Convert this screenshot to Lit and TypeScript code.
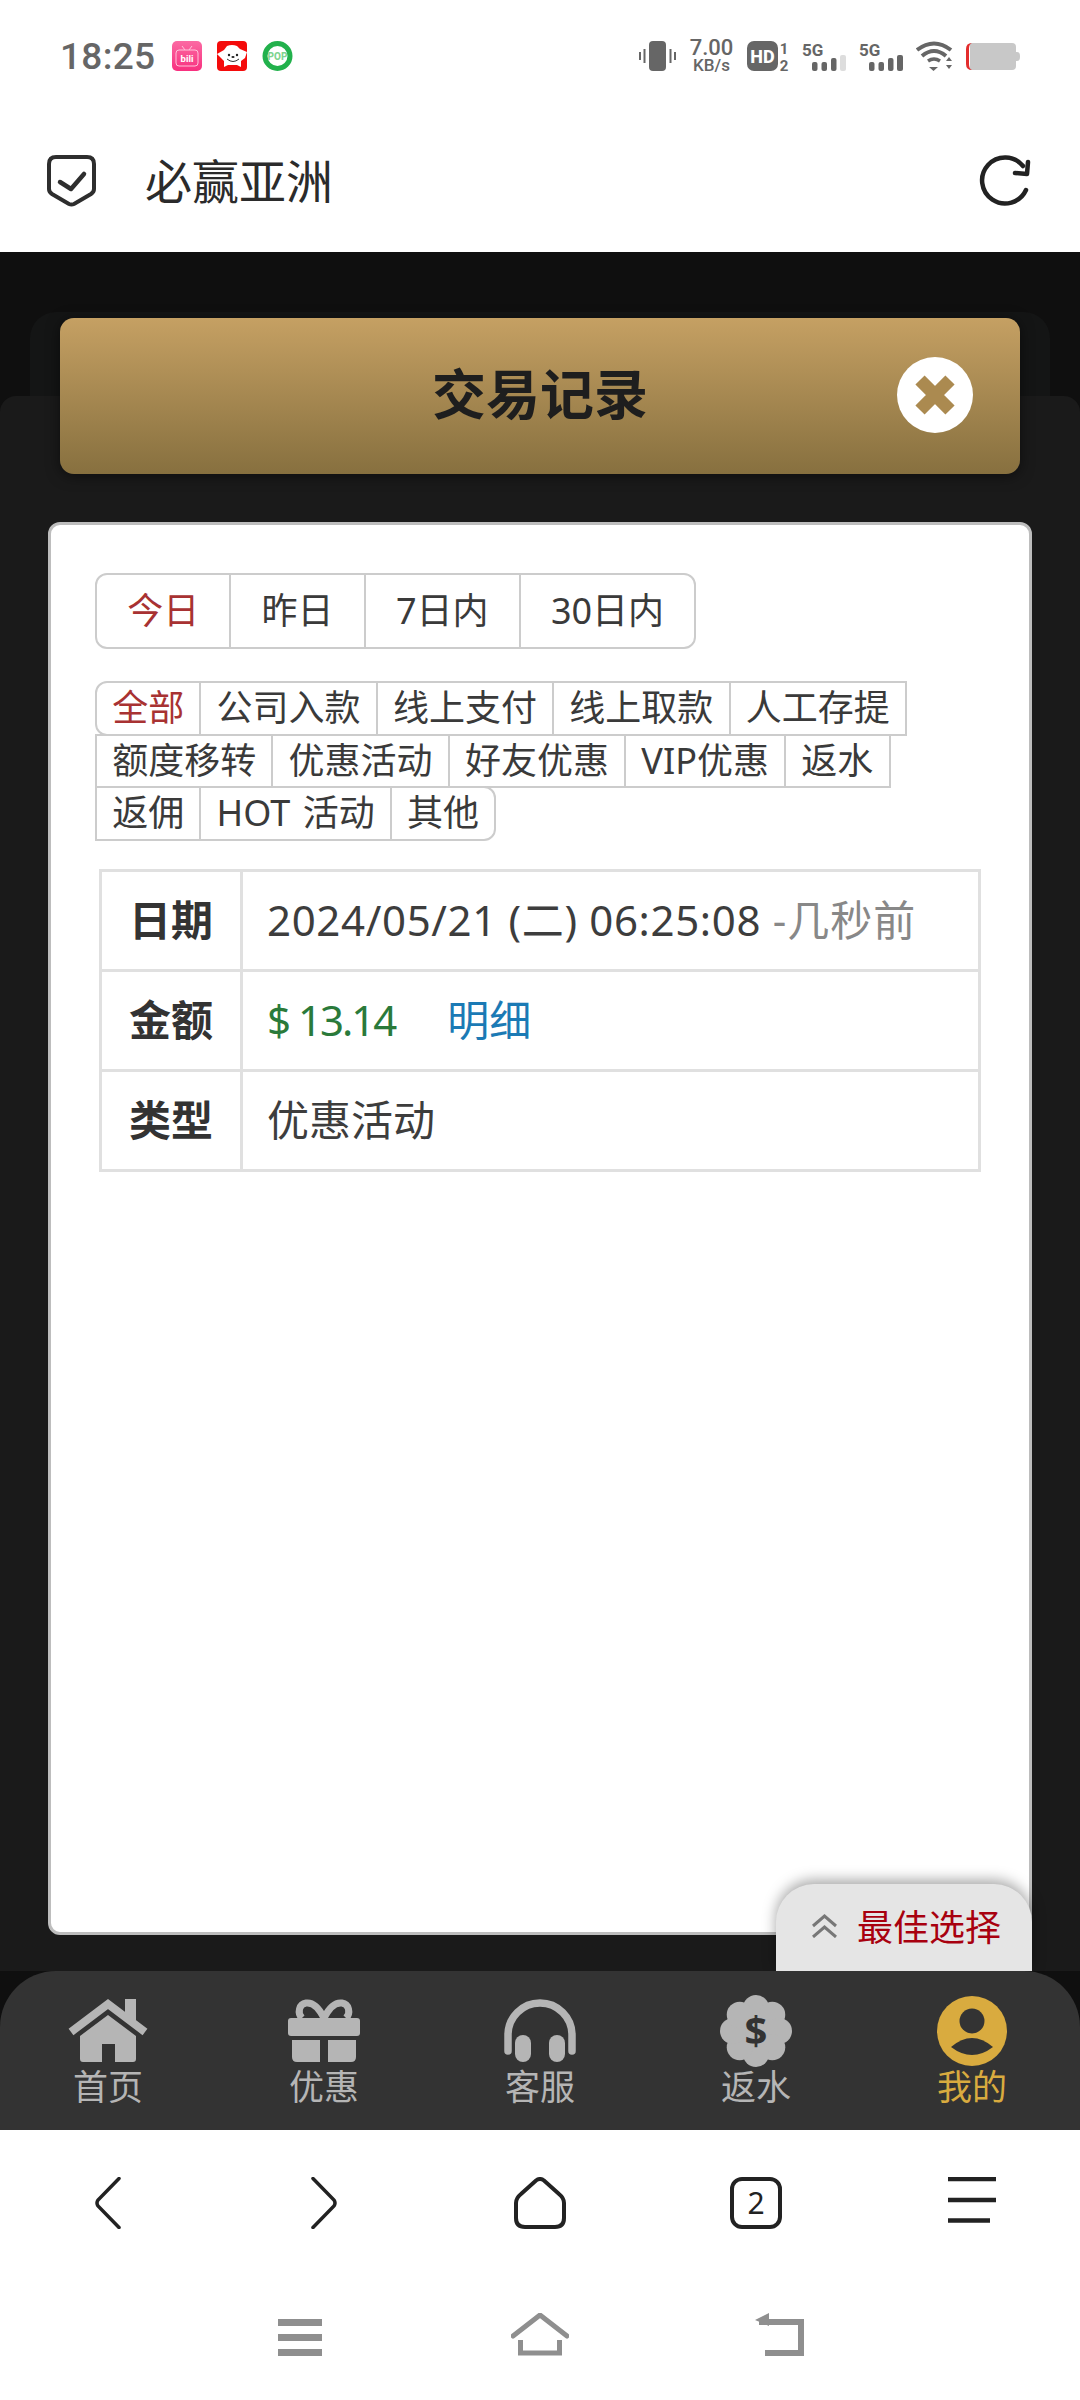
import {LitElement, html, css, svg} from 'lit';
import {customElement, state} from 'lit/decorators.js';

const RANGES = ['今日', '昨日', '7日内', '30日内'];
const TYPES = ['全部', '公司入款', '线上支付', '线上取款', '人工存提', '额度移转', '优惠活动', '好友优惠', 'VIP优惠', '返水', '返佣', 'HOT 活动', '其他'];

// signal strength with the 5G tag on top, last bar can be dimmed
const signal = (dimLast: boolean) => html`
  <svg class="sb-signal" width="44" height="30" viewBox="0 0 44 30">
    <text x="0" y="15" class="sb-tag">5G</text>
    <rect x="10" y="21" width="5.5" height="9" rx="2" fill="#666"/>
    <rect x="19.5" y="21" width="5.5" height="9" rx="2" fill="#666"/>
    <rect x="29" y="17" width="5.5" height="13" rx="2" fill="#666"/>
    <rect x="38" y="14" width="6" height="16" rx="2" fill=${dimLast ? '#ddd' : '#666'}/>
  </svg>`;

const flowerLobes = Array.from({length: 8}, (_, i) => {
  const a = (i * Math.PI) / 4 - Math.PI / 2;
  return svg`<circle cx=${36 + 23 * Math.cos(a)} cy=${36 + 23 * Math.sin(a)} r="13" fill="#b5b5b5"/>`;
});

const NAV = [
  {label: '首页', icon: html`<svg width="82" height="72" viewBox="0 -4 82 72">
      <rect x="58" y="0" width="11" height="22" fill="#b5b5b5"/>
      <path d="M4 33 41 5l37 28" fill="none" stroke="#b5b5b5" stroke-width="8"/>
      <path d="M13 37 41 16l28 21v23q0 3-3 3H48V45H35v18H16q-3 0-3-3z" fill="#b5b5b5"/>
    </svg>`},
  {label: '优惠', icon: html`<svg width="72" height="72" viewBox="0 -4 72 72">
      <path d="M36 19C31 9 25 3 18 4 11 5 9 14 14 19M36 19C41 9 47 3 54 4 61 5 63 14 58 19" fill="none" stroke="#b5b5b5" stroke-width="7"/>
      <rect x="0" y="19" width="72" height="18" rx="3" fill="#b5b5b5"/>
      <path d="M4 41h28v22H9q-5 0-5-5zM40 41h28v17q0 5-5 5H40z" fill="#b5b5b5"/>
    </svg>`},
  {label: '客服', icon: html`<svg width="72" height="72" viewBox="0 -4 72 72">
      <path d="M4 52V36a32 32 0 0 1 64 0v16" fill="none" stroke="#b5b5b5" stroke-width="7.5" stroke-linecap="round"/>
      <rect x="11" y="36" width="16" height="27" rx="8" fill="#b5b5b5"/>
      <rect x="45" y="36" width="16" height="27" rx="8" fill="#b5b5b5"/>
    </svg>`},
  {label: '返水', icon: html`<svg width="72" height="72" viewBox="0 0 72 72">
      <circle cx="36" cy="36" r="26" fill="#b5b5b5"/>
      ${flowerLobes}
      <text x="36" y="50" text-anchor="middle" class="nav-dollar">$</text>
    </svg>`},
  {label: '我的', active: true, icon: html`<svg width="72" height="72" viewBox="0 0 72 72">
      <circle cx="36" cy="36" r="35" fill="#d9ab3f"/>
      <circle cx="36" cy="26" r="12.5" fill="#333"/>
      <path d="M15 52q21-18 42 0-21 16-42 0z" fill="#333"/>
    </svg>`},
];

@customElement('app-root')
export class AppRoot extends LitElement {
  @state() range = 0;
  @state() kind = 0;

  static styles = css`
    :host {
      display: flex;
      flex-direction: column;
      width: 1080px;
      height: 2400px;
      background: #fff;
      font-family: "Noto Sans", "Noto Sans CJK SC", sans-serif;
      color: #333;
      overflow: hidden;
    }
    svg { display: block; flex: none; }

    /* phone status bar */
    .status {
      height: 112px;
      flex: none;
      padding: 0 60px 0 60px;
      display: flex;
      align-items: center;
      box-sizing: border-box;
      color: #666;
    }
    .clock {
      font-family: Roboto, sans-serif;
      font-size: 37px;
      font-weight: 500;
      width: 95px;
      margin-right: 17px;
      letter-spacing: 0.3px;
    }
    .app-icons { display: flex; gap: 15px; }
    .sys-icons { margin-left: auto; display: flex; align-items: center; gap: 13px; }
    .speed {
      width: 45px;
      font-family: Roboto, sans-serif;
      font-weight: 500;
      text-align: center;
      white-space: nowrap;
    }
    .speed b { display: block; font-weight: 500; font-size: 22px; line-height: 18px; }
    .speed span { display: block; font-size: 17px; line-height: 16px; }
    .sb-tag { font-size: 17px; font-weight: 700; fill: #666; font-family: Roboto, sans-serif; }
    .sb-hd { font-size: 18px; font-weight: 800; fill: #fff; font-family: Roboto, sans-serif; }
    .sb-sim { font-size: 15px; font-weight: 700; fill: #666; font-family: Roboto, sans-serif; }
    .mini { font-weight: 700; fill: #fff; font-family: Roboto, sans-serif; }
    .mini-pop { font-size: 10px; font-weight: 800; fill: #7ed48f; font-family: Roboto, sans-serif; }

    /* browser title row */
    .appbar {
      height: 140px;
      flex: none;
      padding: 0 46px 2px 47px;
      display: flex;
      align-items: center;
      box-sizing: border-box;
    }
    .appbar h1 {
      margin: 0 0 6px 49px;
      flex: 1;
      font-size: 47px;
      font-weight: 400;
      color: #2b2b2b;
    }

    /* dark page */
    .page {
      flex: 1;
      min-height: 0;
      background: #0f0f0f;
      display: flex;
      flex-direction: column;
      padding-top: 60px;
    }
    .tray-back {
      height: 84px;
      margin: 0 30px;
      flex: none;
      background: #141515;
      border-radius: 26px 26px 0 0;
    }
    .tray {
      position: relative;
      flex: 1;
      min-height: 0;
      display: flex;
      flex-direction: column;
      background: #1a1a1a;
      border-radius: 16px 16px 0 0;
    }
    .title-bar {
      height: 156px;
      margin: -78px 60px 0;
      flex: none;
      display: grid;
      grid-template-columns: 1fr auto 1fr;
      align-items: center;
      border-radius: 14px;
      background: linear-gradient(#c5a063, #87703f);
      box-shadow: 0 2px 14px rgba(0, 0, 0, 0.5);
    }
    .title-bar h2 {
      grid-column: 2;
      margin: 0 0 10px;
      font-size: 54px;
      font-weight: 700;
      color: #1e1e1e;
    }
    .close {
      grid-column: 3;
      justify-self: end;
      width: 76px;
      height: 76px;
      margin: 0 47px 3px 0;
      border-radius: 50%;
      background: #fff;
      display: flex;
      align-items: center;
      justify-content: center;
    }

    .card {
      flex: 1;
      min-height: 0;
      margin: 48px 48px 36px;
      padding: 48px 44px;
      border: 3px solid #bdbdbd;
      border-radius: 12px;
      background: #fff;
    }
    .ranges {
      display: inline-flex;
      vertical-align: top;
      border: 2px solid #ccc;
      border-radius: 12px;
      margin-bottom: 32px;
    }
    .ranges button {
      all: unset;
      height: 72px;
      padding: 0 30.2px;
      font-size: 36px;
      line-height: 72px;
      color: #3a3a3a;
      border-left: 2px solid #ccc;
    }
    .ranges button:first-child { border-left: 0; }
    .on { color: #a83232 !important; }

    .kinds { display: flex; flex-wrap: wrap; }
    .kinds button {
      all: unset;
      height: 50.5px;
      line-height: 46px;
      padding: 0 15.2px;
      margin: 0 -2px -2px 0;
      border: 2px solid #ccc;
      font-size: 36px;
      word-spacing: 3px;
      color: #3a3a3a;
      white-space: nowrap;
    }
    .kinds button:first-child { border-radius: 12px 0 0 12px; }
    .kinds button:last-child { border-radius: 0 12px 12px 0; }

    table {
      width: 882px;
      margin: 30px 0 0 4px;
      border-collapse: collapse;
      font-size: 42px;
    }
    th, td { height: 100px; padding: 0 0 6px; box-sizing: border-box; border: 3px solid #e0e0e0; }
    th { width: 141px; font-weight: 700; color: #333; }
    td { padding-left: 24px; color: #3d3d3d; white-space: nowrap; }
    .stamp { letter-spacing: 0.65px; }
    .ago { color: #888; letter-spacing: 1px; }
    .money { color: #2a7a3a; letter-spacing: -2px; }
    .detail { color: #1b7ab5; margin-left: 52px; }

    /* tab stuck to the top of the bottom nav */
    .pick {
      position: absolute;
      right: 48px;
      bottom: 0;
      width: 256px;
      height: 87px;
      padding: 0 0 4px 35px;
      box-sizing: border-box;
      display: flex;
      align-items: center;
      gap: 19px;
      background: #e5e5e5;
      border-radius: 38px 38px 0 0;
      box-shadow: 0 -4px 14px rgba(0, 0, 0, 0.35);
      font-size: 36px;
      color: #a8000f;
      white-space: nowrap;
    }

    .nav {
      position: relative;
      z-index: 1;
      height: 159px;
      flex: none;
      display: flex;
      background: #333;
      border-radius: 56px 56px 0 0;
    }
    .nav a {
      flex: 1;
      display: flex;
      flex-direction: column;
      align-items: center;
      padding-top: 24px;
      font-size: 35px;
      line-height: 40px;
      color: #b5b5b5;
    }
    .nav a.active { color: #d9ab3f; }
    .nav-dollar { font-size: 40px; font-weight: 700; fill: #333; }

    /* browser toolbar */
    .tools {
      height: 140px;
      flex: none;
      display: flex;
      align-items: flex-start;
      padding-top: 47px;
      box-sizing: border-box;
    }
    .tools span { flex: 1; display: flex; justify-content: center; }
    .tab-count { font-size: 30px; fill: #222; }

    /* android soft keys */
    .softkeys {
      height: 130px;
      flex: none;
      box-sizing: border-box;
      display: flex;
      justify-content: center;
      gap: 189px;
      padding: 43px 0 0 3px;
    }
    .softkeys svg:last-child { margin-left: -3px; }
  `;

  render() {
    return html`
      <div class="status">
        <div class="clock">18:25</div>
        <div class="app-icons">
          <svg width="30" height="30" viewBox="0 0 30 30">
            <defs><linearGradient id="bili" x2="0" y2="1"><stop offset="0" stop-color="#fb6aa3"/><stop offset="1" stop-color="#f8307f"/></linearGradient></defs>
            <rect width="30" height="30" rx="5" fill="url(#bili)"/>
            <path d="M10 5l3 4M20 5l-3 4" stroke="#ffc2da" stroke-width="1"/>
            <rect x="4" y="9" width="22" height="16" rx="3" fill="none" stroke="#ffc2da" stroke-width="1"/>
            <text x="15" y="21" text-anchor="middle" class="mini" font-size="9.5">bili</text>
          </svg>
          <svg width="30" height="30" viewBox="0 0 30 30">
            <rect width="30" height="30" rx="4" fill="#f40b0b"/>
            <path d="M0 13 7 9l3-4q5-2 10 0l3 3 7 3-2 6-4 3v6l-4-2H11l-4 2v-6l-3-3z" fill="#fff"/>
            <circle cx="12" cy="14" r="1.200" fill="#222"/><circle cx="20" cy="14" r="1.200" fill="#222"/>
            <ellipse cx="16" cy="16" rx="1.600" ry="1" fill="#222"/>
            <path d="M10 18q6 5 12 0" fill="none" stroke="#333" stroke-width="1"/>
          </svg>
          <svg width="31" height="30" viewBox="0 0 31 30">
            <circle cx="15.5" cy="15" r="12.5" fill="#fff" stroke="#22b14c" stroke-width="5"/>
            <text x="15.5" y="18.5" text-anchor="middle" class="mini-pop">POP</text>
          </svg>
        </div>
        <div class="sys-icons">
          <svg width="37" height="30" viewBox="0 0 37 30">
            <rect x="10" y="0" width="17" height="30" rx="4" fill="#666"/>
            <path d="M5.5 8v14M1 11v8M31.5 8v14M36 11v8" stroke="#666" stroke-width="2"/>
          </svg>
          <div class="speed"><b>7.00</b><span>KB/s</span></div>
          <svg width="42" height="38" viewBox="0 0 42 38">
            <rect y="4" width="31" height="30" rx="7" fill="#666"/>
            <text x="15.5" y="25.5" text-anchor="middle" class="sb-hd">HD</text>
            <text x="37" y="17" text-anchor="middle" class="sb-sim">1</text>
            <text x="37" y="34" text-anchor="middle" class="sb-sim">2</text>
          </svg>
          ${signal(true)}
          ${signal(false)}
          <svg width="37" height="32" viewBox="0 0 37 32">
            <path d="M1 10Q18-3 35 10M6 16Q18 6 30 16" fill="none" stroke="#666" stroke-width="4"/>
            <path d="M12 21q6-4 12 0" fill="none" stroke="#666" stroke-width="3.5"/>
            <path d="M13 27h9l-4.500 4z" fill="#666"/>
            <path d="M30 21h6l-3-4zM30 25h6l-3 4z" fill="#666"/>
          </svg>
          <svg width="54" height="27" viewBox="0 0 54 27">
            <path d="M4 0h42q4 0 4 4v19q0 4-4 4H4z" fill="#c8c8c8"/>
            <path d="M6 0Q0 0 0 6v15q0 6 6 6-3-1-3-6V6q0-5 3-6z" fill="#e32d2d"/>
            <path d="M50 9h1q3 0 3 4v1q0 4-3 4h-1z" fill="#c8c8c8"/>
          </svg>
        </div>
      </div>

      <div class="appbar">
        <svg width="49" height="52" viewBox="0 0 49 52">
          <path d="M9 2h31q7 0 7 7v25q0 3-3 5l-17 10q-2.500 1.200-5 0L5 39q-3-2-3-5V9q0-7 7-7z" fill="none" stroke="#2e2e2e" stroke-width="4"/>
          <path d="M13 27l11 7 13-15" fill="none" stroke="#2e2e2e" stroke-width="4.500" stroke-linecap="round" stroke-linejoin="round"/>
        </svg>
        <h1>必赢亚洲</h1>
        <svg width="56" height="56" viewBox="0 0 56 56">
          <path d="M48 37A23 23 0 1 1 45 13" fill="none" stroke="#222" stroke-width="4.500" stroke-linecap="round"/>
          <path d="M50 9l-1 12-12-1" fill="none" stroke="#222" stroke-width="4.500" stroke-linecap="round" stroke-linejoin="round"/>
        </svg>
      </div>

      <div class="page">
        <div class="tray-back"></div>
        <div class="tray">
          <div class="title-bar">
            <h2>交易记录</h2>
            <div class="close">
              <svg width="44" height="44" viewBox="0 0 44 44">
                <path d="M7 7l30 30M37 7L7 37" stroke="#ab8a50" stroke-width="13"/>
              </svg>
            </div>
          </div>

          <div class="card">
            <div class="ranges">
              ${RANGES.map((r, i) => html`<button class=${i === this.range ? 'on' : ''} @click=${() => (this.range = i)}>${r}</button>`)}
            </div>
            <div class="kinds">
              ${TYPES.map((t, i) => html`<button class=${i === this.kind ? 'on' : ''} @click=${() => (this.kind = i)}>${t}</button>`)}
            </div>
            <table>
              <tr><th>日期</th><td><span class="stamp">2024/05/21 (二) 06:25:08 <span class="ago">-几秒前</span></span></td></tr>
              <tr><th>金额</th><td><span class="money">$ 13.14</span><span class="detail">明细</span></td></tr>
              <tr><th>类型</th><td>优惠活动</td></tr>
            </table>
          </div>

          <div class="pick">
            <svg width="27" height="24" viewBox="0 0 27 24">
              <path d="M2 12 13.500 2 25 12M2 23l11.500-10L25 23" fill="none" stroke="#777" stroke-width="3"/>
            </svg>
            最佳选择
          </div>
        </div>

        <div class="nav">
          ${NAV.map(n => html`<a class=${n.active ? 'active' : ''}>${n.icon}<span>${n.label}</span></a>`)}
        </div>
      </div>

      <div class="tools">
        <span><svg width="26" height="52" viewBox="0 0 26 52"><path d="M24 1.500 3 23q-2 3 0 6l21 21.500" fill="none" stroke="#222" stroke-width="3.500" stroke-linecap="round"/></svg></span>
        <span><svg width="26" height="52" viewBox="0 0 26 52"><path d="M2 1.500 23 23q2 3 0 6L2 50.500" fill="none" stroke="#222" stroke-width="3.500" stroke-linecap="round"/></svg></span>
        <span><svg width="52" height="52" viewBox="0 0 52 52"><path d="M7 17 22 3.500q4-3 8 0L45 17q5 4 5 9v15q0 9-9 9H11q-9 0-9-9V26q0-5 5-9z" fill="none" stroke="#222" stroke-width="4"/></svg></span>
        <span><svg width="52" height="52" viewBox="0 0 52 52"><rect x="2" y="2" width="48" height="48" rx="10" fill="none" stroke="#222" stroke-width="4"/><text x="26" y="37" text-anchor="middle" class="tab-count">2</text></svg></span>
        <span><svg width="48" height="46" viewBox="0 0 48 46"><path d="M0 2h48M0 23h48M0 43.500h42" stroke="#222" stroke-width="4.500"/></svg></span>
      </div>

      <div class="softkeys">
        <svg width="44" height="43" viewBox="0 0 44 43"><path d="M0 9.500h44M0 24.500h44M0 39.500h44" stroke="#8f8f8f" stroke-width="7"/></svg>
        <svg width="58" height="43" viewBox="0 0 58 43"><path d="M2 23 29 2l27 21" fill="none" stroke="#8f8f8f" stroke-width="5" stroke-linecap="round"/><path d="M9.500 27v13h39V27" fill="none" stroke="#8f8f8f" stroke-width="5"/></svg>
        <svg width="50" height="43" viewBox="0 0 50 43"><path d="M4 9h42v31H10" fill="none" stroke="#8f8f8f" stroke-width="6"/><path d="M0 7 14 0v13z" fill="#8f8f8f"/></svg>
      </div>
    `;
  }
}
